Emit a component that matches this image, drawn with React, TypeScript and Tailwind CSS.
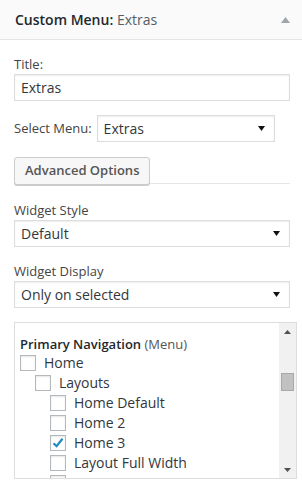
import React from "react";

function Caret({ className = "" }: { className?: string }) {
  return (
    <svg width="7" height="5" viewBox="0 0 7 5" className={className}>
      <path d="M0 0 H7 L3.5 5 Z" fill="#111" />
    </svg>
  );
}

function Select({ value, className = "" }: { value: string; className?: string }) {
  return (
    <div
      className={
        "h-[27px] border border-[#ddd] bg-white shadow-[inset_0_1px_2px_rgba(0,0,0,0.07)] flex items-center justify-between pl-[6px] pr-[9px] text-[14px] text-[#32373c] " +
        className
      }
    >
      <span>{value}</span>
      <Caret />
    </div>
  );
}

function Box({ checked = false }: { checked?: boolean }) {
  return (
    <div className="w-[16px] h-[16px] border border-[#b4b9be] bg-white shadow-[inset_0_1px_2px_rgba(0,0,0,0.1)] flex items-center justify-center shrink-0">
      {checked && (
        <svg width="14" height="14" viewBox="0 0 14 14">
          <path d="M2.5 7.2 L5.6 10.2 L11.5 2.8" stroke="#1e8cbe" strokeWidth="2.2" fill="none" strokeLinejoin="miter" />
        </svg>
      )}
    </div>
  );
}

function Row({ level, label, checked = false }: { level: number; label: string; checked?: boolean }) {
  const pad = ["pl-0", "pl-[15px]", "pl-[30px]"][level];
  return (
    <div className={"h-[20px] flex items-center gap-[8px] " + pad}>
      <Box checked={checked} />
      {label && <span className="text-[14px] text-[#32373c] leading-[20px]">{label}</span>}
    </div>
  );
}

export default function App() {
  return (
    <div className="w-[302px] h-[481px] bg-white overflow-hidden font-['Open_Sans',sans-serif] text-[#444]">
      <div className="h-[40px] bg-[#fafafa] border-b border-[#e5e5e5] flex items-center justify-between pl-[15px] pr-[12px]">
        <div className="text-[14px] text-[#23282d]">
          <span className="font-semibold">Custom Menu:</span>{" "}
          <span className="text-[#555d66]">Extras</span>
        </div>
        <svg width="9" height="6" viewBox="0 0 9 6">
          <path d="M0 6 L4.5 0 L9 6 Z" fill="#a0a5aa" />
        </svg>
      </div>

      <div className="pl-[14px] pr-[12px]">
        <div className="pt-[15px] text-[13px] leading-[18px]">Title:</div>
        <div className="mt-[1px] h-[27px] border border-[#ddd] shadow-[inset_0_1px_2px_rgba(0,0,0,0.07)] flex items-center pl-[6px] text-[14px] text-[#32373c]">
          Extras
        </div>

        <div className="mt-[14px] flex items-center gap-[5px]">
          <span className="text-[13px]">Select Menu:</span>
          <Select value="Extras" className="w-[178px]" />
        </div>

        <div className="mt-[15px] flex items-end">
          <div className="h-[28px] px-[10px] border border-[#ccc] rounded-[3px] bg-[#f7f7f7] shadow-[0_1px_0_#ccc] flex items-center text-[13px] font-semibold text-[#555] shrink-0">
            Advanced Options
          </div>
          <div className="flex-1 border-b border-[#e5e5e5] mb-[1px]" />
        </div>

        <div className="mt-[16px] text-[13px] leading-[18px]">Widget Style</div>
        <Select value="Default" className="mt-[1px]" />

        <div className="mt-[15px] text-[13px] leading-[18px]">Widget Display</div>
        <Select value="Only on selected" className="mt-[1px]" />
      </div>

      <div className="ml-[14px] mr-[5px] mt-[14px] h-[157px] border border-[#ddd] flex overflow-hidden">
        <div className="flex-1 pl-[5px] pt-[12px]">
          <div className="text-[13px] leading-[18px] text-[#23282d]">
            <span className="font-semibold">Primary Navigation</span>{" "}
            <span className="text-[#555]">(Menu)</span>
          </div>
          <div>
            <Row level={0} label="Home" />
            <Row level={1} label="Layouts" />
            <Row level={2} label="Home Default" />
            <Row level={2} label="Home 2" />
            <Row level={2} label="Home 3" checked />
            <Row level={2} label="Layout Full Width" />
            <Row level={2} label="" />
          </div>
        </div>
        <div className="w-[17px] bg-[#f1f1f1] flex flex-col items-center">
          <div className="h-[17px] flex items-center justify-center">
            <svg width="7" height="4" viewBox="0 0 7 4">
              <path d="M0 4 L3.5 0 L7 4 Z" fill="#505050" />
            </svg>
          </div>
          <div className="mt-[33px] w-[13px] h-[18px] bg-[#c1c1c1] border border-[#a9a9a9]" />
          <div className="flex-1" />
          <div className="h-[17px] flex items-center justify-center">
            <svg width="7" height="4" viewBox="0 0 7 4">
              <path d="M0 0 L7 0 L3.5 4 Z" fill="#505050" />
            </svg>
          </div>
        </div>
      </div>
    </div>
  );
}
